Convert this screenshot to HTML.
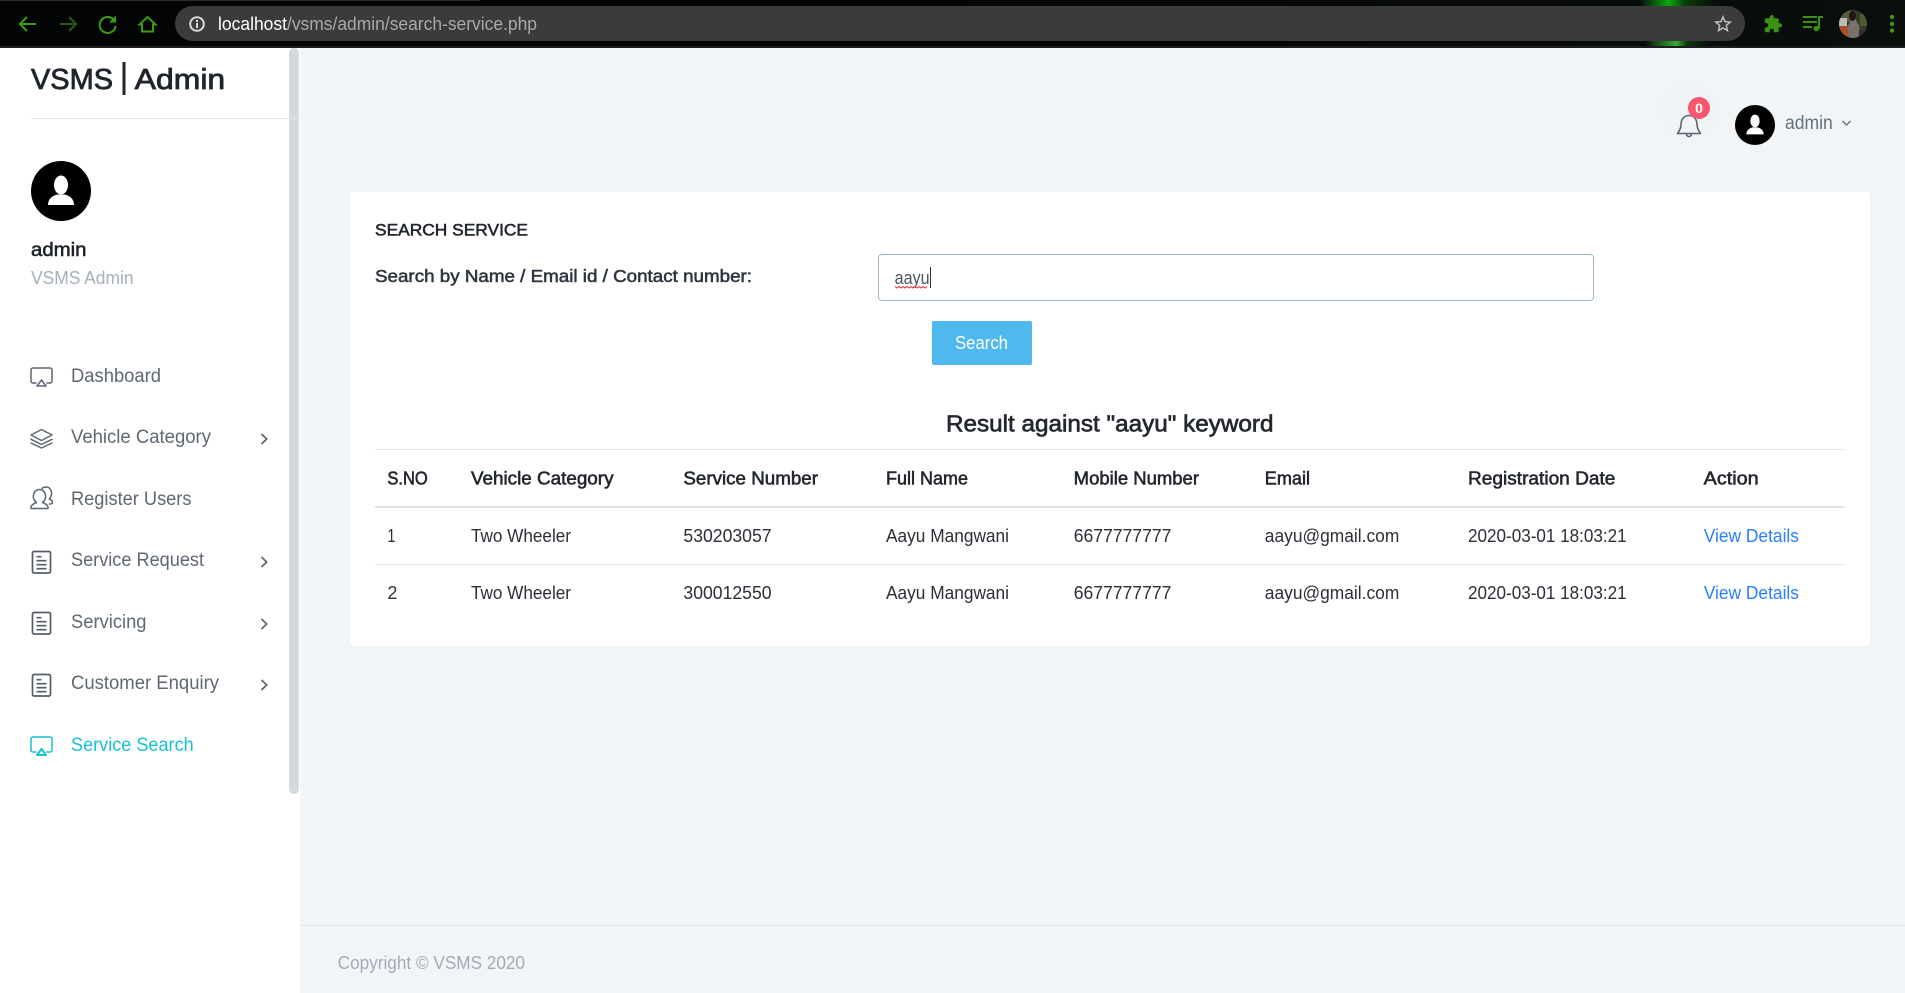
<!DOCTYPE html>
<html lang="en">
<head>
<meta charset="utf-8">
<title>VSMS | Admin - Search Service</title>
<style>
html,body{margin:0;padding:0;width:1905px;height:993px;overflow:hidden;background:#f2f5f8}
body{position:relative;font-family:"Liberation Sans",sans-serif}
.box{position:absolute;box-sizing:border-box}
#bar{left:0;top:0;width:1905px;height:48px;background:linear-gradient(90deg,#030504 0,#050706 60%,#0a0f0c 100%);border-bottom:2px solid #1c1d1c}
#barTop{left:0;top:0;width:480px;height:1px;background:#2a2a2a}
#glow1{left:1640px;top:0;width:75px;height:6px;background:linear-gradient(90deg,rgba(10,160,10,0),#0fa80f 38%,rgba(10,120,10,.45) 60%,rgba(10,160,10,0))}
#glow2{left:1645px;top:41px;width:65px;height:5px;background:linear-gradient(90deg,rgba(40,170,40,0),#39ad32 48%,rgba(20,110,20,.45) 65%,rgba(40,170,40,0))}
#pill{left:175px;top:6px;width:1570px;height:35px;border-radius:18px;background:#3b3b3b}
#side{left:0;top:48px;width:300px;height:945px;background:#fff}
#track{left:289px;top:48px;width:10px;height:746px;background:#d5d9dc;border-radius:5px}
#sideline{left:31px;top:118px;width:269px;height:1px;background:#e4e6e8}
#card{left:350px;top:192px;width:1520px;height:454px;background:#fff;border-radius:4px}
#input{left:878px;top:254px;width:716px;height:47px;background:#fff;border:1px solid #9fb9c9;border-radius:4px}
#btn{left:932px;top:321px;width:100px;height:44px;background:#4fb9ee;border-radius:2px}
.line{background:#e3e6e9;left:375px;width:1470px;height:1px}
#l1{top:449px}
#l2{top:506px;height:2px;background:#dfe3e7}
#l3{top:564px}
#foot{left:300px;top:925px;width:1605px;height:1px;background:#e1e5ea}
#ov{position:absolute;left:0;top:0;width:1905px;height:993px}
text{font-family:"Liberation Sans",sans-serif}
.m{stroke-width:.55px}
.nav{font-size:19px;fill:#5f6772}
.hd{font-size:18px;fill:#22262d;stroke:#22262d}
.td{font-size:18px;fill:#2b2f36}
.a{font-size:18px;fill:#2a7fff}
.ic{fill:none;stroke:#5d6672;stroke-width:1.5;stroke-linejoin:round;stroke-linecap:round}
.gr{fill:none;stroke:#3f9b14;stroke-width:2}
</style>
</head>
<body>
<div class="box" id="bar"></div>
<div class="box" id="barTop"></div>
<div class="box" id="glow1"></div>
<div class="box" id="glow2"></div>
<div class="box" id="pill"></div>
<div class="box" id="side"></div>
<div class="box" id="track"></div>
<div class="box" id="sideline"></div>
<div class="box" id="card"></div>
<div class="box" id="input"></div>
<div class="box" id="btn"></div>
<div class="box line" id="l1"></div>
<div class="box line" id="l2"></div>
<div class="box line" id="l3"></div>
<div class="box" id="foot"></div>

<svg id="ov" viewBox="0 0 1905 993" xmlns="http://www.w3.org/2000/svg">
<defs>
<clipPath id="cav"><circle cx="1853" cy="24" r="14"/></clipPath>
</defs>

<!-- browser chrome -->
<path class="gr" d="M36 24H20M27 17l-7 7 7 7"/>
<path class="gr" style="stroke:#255a10" d="M60 24H76M69 17l7 7-7 7"/>
<path class="gr" d="M113.5 19.5A8 8 0 1 0 115.6 26"/>
<path d="M116 15.5v7h-7z" fill="#3f9b14"/>
<path class="gr" d="M147.5 17L155.5 24.5H153V31.5H142V24.5H139.5Z"/>
<circle cx="197" cy="24" r="6.8" fill="none" stroke="#d8d8d8" stroke-width="2"/>
<rect x="196" y="23" width="2" height="5" fill="#d8d8d8"/>
<rect x="196" y="20" width="2" height="2" fill="#d8d8d8"/>
<text x="218" y="30" font-size="18" fill="#fff" textLength="69" lengthAdjust="spacingAndGlyphs">localhost</text>
<text x="287" y="30" font-size="18" fill="#a9a9a9" textLength="250" lengthAdjust="spacingAndGlyphs">/vsms/admin/search-service.php</text>
<g transform="translate(1712.2 13.2) scale(.9)"><path fill="#c4c4c4" d="M22 9.24l-7.19-.62L12 2 9.19 8.63 2 9.24l5.46 4.73L5.82 21 12 17.27 18.18 21l-1.63-7.03L22 9.24zM12 15.4l-3.76 2.27 1-4.28-3.32-2.88 4.38-.38L12 6.1l1.71 4.04 4.38.38-3.32 2.88 1 4.28L12 15.4z"/></g>
<g transform="translate(1763.2 14.2) scale(.82)"><path fill="#3b9112" d="M20.5 11H19V7c0-1.1-.9-2-2-2h-4V3.5C13 2.12 11.88 1 10.5 1S8 2.12 8 3.5V5H4c-1.1 0-1.99.9-1.99 2v3.8H3.5c1.49 0 2.7 1.21 2.7 2.7s-1.21 2.7-2.7 2.7H2V20c0 1.1.9 2 2 2h3.8v-1.5c0-1.49 1.21-2.7 2.7-2.7 1.49 0 2.7 1.21 2.7 2.7V22H17c1.1 0 2-.9 2-2v-4h1.5c1.38 0 2.5-1.12 2.5-2.5S21.88 11 20.5 11z"/></g>
<path d="M1803 17h14M1803 22h14M1803 27h9M1819 29V17h4" fill="none" stroke="#3b9112" stroke-width="2"/>
<circle cx="1816.3" cy="28.5" r="2.8" fill="#3b9112"/>
<g clip-path="url(#cav)">
<rect x="1839" y="10" width="28" height="28" fill="#3a3a28"/>
<rect x="1839" y="10" width="12" height="12" fill="#5a5a40"/>
<rect x="1839" y="18" width="8" height="8" fill="#b9bdb6"/>
<rect x="1839" y="26" width="13" height="12" fill="#a8502a"/>
<rect x="1860" y="14" width="7" height="12" fill="#4f5a34"/>
<rect x="1858" y="30" width="9" height="8" fill="#332c2a"/>
<path d="M1850 13h5l1.500 9 3 4-1 12h-10l-1-12 3-4z" fill="#77736c"/>
<ellipse cx="1852.500" cy="16" rx="3.500" ry="5" fill="#201512"/>
</g>
<g fill="#3f9b14"><circle cx="1892" cy="17" r="2.1"/><circle cx="1892" cy="24" r="2.1"/><circle cx="1892" cy="30.5" r="2.1"/></g>

<!-- sidebar header -->
<text x="31" y="89" font-size="29" fill="#20252c" stroke="#20252c" style="stroke-width:.8px" textLength="82" lengthAdjust="spacingAndGlyphs">VSMS</text>
<rect x="122.500" y="62" width="3" height="33" fill="#20252c"/>
<text x="134.700" y="89" font-size="29" fill="#20252c" stroke="#20252c" style="stroke-width:.8px" textLength="90.500" lengthAdjust="spacingAndGlyphs">Admin</text>
<circle cx="61" cy="191" r="30" fill="#000"/>
<g transform="translate(61 191)" fill="#fff"><ellipse cx="0" cy="-6" rx="7" ry="9.5"/><path d="M-13 14c0-6 4-9 9-10.500h8c5 1.500 9 4.500 9 10.500z"/></g>
<text x="31" y="256" font-size="19" fill="#1e2229" stroke="#1e2229" class="m" textLength="55.500" lengthAdjust="spacingAndGlyphs">admin</text>
<text x="31" y="284" font-size="18" fill="#a5b0bb" textLength="102.500" lengthAdjust="spacingAndGlyphs">VSMS Admin</text>

<!-- nav -->
<text class="nav" x="71" y="382" textLength="90" lengthAdjust="spacingAndGlyphs">Dashboard</text>
<text class="nav" x="71" y="443" textLength="140" lengthAdjust="spacingAndGlyphs">Vehicle Category</text>
<text class="nav" x="71" y="505" textLength="120.500" lengthAdjust="spacingAndGlyphs">Register Users</text>
<text class="nav" x="71" y="566" textLength="133" lengthAdjust="spacingAndGlyphs">Service Request</text>
<text class="nav" x="71" y="628" textLength="75.500" lengthAdjust="spacingAndGlyphs">Servicing</text>
<text class="nav" x="71" y="689" textLength="148" lengthAdjust="spacingAndGlyphs">Customer Enquiry</text>
<text class="nav" style="fill:#17c1d2" x="71" y="751" textLength="122.700" lengthAdjust="spacingAndGlyphs">Service Search</text>

<path class="ic" d="M36 383h-3a2 2 0 0 1-2-2V370a2 2 0 0 1 2-2h17a2 2 0 0 1 2 2v11a2 2 0 0 1-2 2h-3"/>
<path class="ic" d="M41.500 380l4.500 6h-9z" stroke-width="2"/>
<path class="ic" d="M41.500 429.500L52 435 41.500 440.500 31 435zM31 439.300L41.500 444.500 52 439.300M31 443L41.500 448 52 443"/>
<path class="ic" d="M31 508.500v-1.500c0-2 3-3.500 5.500-4.500c-2.500-2-3.500-5-3-7.500c.5-3.500 3-5.500 6-5.500s5.500 2 6 5.500c.5 2.500-.5 5.500-3 7.500c2.500 1 5.500 2.500 5.500 4.500v1.500z"/>
<path class="ic" d="M42 488.500c1-1 2.500-1.500 4-1.500c3 0 5 2 5.500 5c.3 2.500-.5 5-2.200 7c1.700.7 3.200 1.700 3.200 3.500c0 1-1 1.500-3 1.500"/>
<g id="doc">
<rect class="ic" x="32.500" y="551.500" width="18" height="21.500" rx="1.500" style="stroke:#565d68;stroke-width:1.700"/>
<path class="ic" style="stroke:#565d68;stroke-width:1.700;stroke-linecap:butt" d="M36.500 556.700h5M36.500 560.700h10M36.500 564.700h10M36.500 568.700h10"/>
</g>
<g transform="translate(0 61)"><rect class="ic" x="32.500" y="551.500" width="18" height="21.500" rx="1.500" style="stroke:#565d68;stroke-width:1.700"/><path class="ic" style="stroke:#565d68;stroke-width:1.700;stroke-linecap:butt" d="M36.500 556.700h5M36.500 560.700h10M36.500 564.700h10M36.500 568.700h10"/></g>
<g transform="translate(0 123)"><rect class="ic" x="32.500" y="551.500" width="18" height="21.500" rx="1.500" style="stroke:#565d68;stroke-width:1.700"/><path class="ic" style="stroke:#565d68;stroke-width:1.700;stroke-linecap:butt" d="M36.500 556.700h5M36.500 560.700h10M36.500 564.700h10M36.500 568.700h10"/></g>
<path class="ic" style="stroke:#17c1d2" d="M36 752h-3a2 2 0 0 1-2-2V739a2 2 0 0 1 2-2h17a2 2 0 0 1 2 2v11a2 2 0 0 1-2 2h-3"/>
<path class="ic" style="stroke:#17c1d2;stroke-width:2" d="M41.500 749l4.500 6h-9z"/>

<path class="ic" style="stroke-width:1.800" d="M262 434.500l4.700 4.500-4.700 4.500"/>
<path class="ic" style="stroke-width:1.800" d="M262 557.500l4.700 4.500-4.700 4.500"/>
<path class="ic" style="stroke-width:1.800" d="M262 619.500l4.700 4.500-4.700 4.500"/>
<path class="ic" style="stroke-width:1.800" d="M262 680.500l4.700 4.500-4.700 4.500"/>

<!-- top right -->
<circle cx="1689" cy="110" r="30" fill="#f1f4f7"/>
<path fill="none" stroke="#5a6675" stroke-width="1.600" stroke-linejoin="round" d="M1689 115.500c-5 0-8 4-8 9c0 4-2 7-3.500 9h23c-1.500-2-3.500-5-3.500-9c0-5-3-9-8-9z"/>
<path fill="none" stroke="#5a6675" stroke-width="1.600" d="M1686.500 134a2.500 2.500 0 0 0 5 0"/>
<circle cx="1699" cy="108" r="11" fill="#f7566f"/>
<text x="1699" y="113" font-size="14" font-weight="700" fill="#fff" text-anchor="middle">0</text>
<circle cx="1755" cy="125" r="20" fill="#000"/>
<g transform="translate(1755 125) scale(.667)" fill="#fff"><ellipse cx="0" cy="-6" rx="7" ry="9.500"/><path d="M-13 14c0-6 4-9 9-10.500h8c5 1.500 9 4.500 9 10.500z"/></g>
<text x="1785" y="129" font-size="19" fill="#63707e" textLength="47.700" lengthAdjust="spacingAndGlyphs">admin</text>
<path fill="none" stroke="#63707e" stroke-width="1.400" d="M1842.500 121l4 4 4-4"/>

<!-- card contents -->
<text x="375" y="235.700" font-size="17" fill="#22262d" stroke="#22262d" class="m" textLength="153" lengthAdjust="spacingAndGlyphs">SEARCH SERVICE</text>
<text x="375" y="282.200" font-size="17.500" fill="#2f3540" stroke="#2f3540" class="m" textLength="377" lengthAdjust="spacingAndGlyphs">Search by Name / Email id / Contact number:</text>
<text x="894.600" y="284" font-size="18" fill="#4a5560" textLength="35" lengthAdjust="spacingAndGlyphs">aayu</text>
<path d="M895 286.500l2 1.500 2-1.500 2 1.500 2-1.500 2 1.500 2-1.500 2 1.500 2-1.500 2 1.500 2-1.500 2 1.500 2-1.500 2 1.500 2-1.500 2 1.500 2-1.500" fill="none" stroke="#e8333c" stroke-width="1"/>
<rect x="930" y="267" width="1" height="21" fill="#2d3640"/>
<text x="955" y="349" font-size="18" fill="#fff" textLength="53" lengthAdjust="spacingAndGlyphs">Search</text>
<text x="946" y="431.400" font-size="23" fill="#23272e" stroke="#23272e" style="stroke-width:.65px" textLength="327.500" lengthAdjust="spacingAndGlyphs">Result against "aayu" keyword</text>

<text class="hd m" x="387.400" y="484.500" textLength="40.400" lengthAdjust="spacingAndGlyphs">S.NO</text>
<text class="hd m" x="471" y="484.500" textLength="142.500" lengthAdjust="spacingAndGlyphs">Vehicle Category</text>
<text class="hd m" x="683.400" y="484.500" textLength="134.600" lengthAdjust="spacingAndGlyphs">Service Number</text>
<text class="hd m" x="886" y="484.500" textLength="82" lengthAdjust="spacingAndGlyphs">Full Name</text>
<text class="hd m" x="1073.700" y="484.500" textLength="125.300" lengthAdjust="spacingAndGlyphs">Mobile Number</text>
<text class="hd m" x="1264.800" y="484.500" textLength="45.200" lengthAdjust="spacingAndGlyphs">Email</text>
<text class="hd m" x="1468" y="484.500" textLength="147.400" lengthAdjust="spacingAndGlyphs">Registration Date</text>
<text class="hd m" x="1703.700" y="484.500" textLength="54.900" lengthAdjust="spacingAndGlyphs">Action</text>

<text class="td" x="387.400" y="542" textLength="8" lengthAdjust="spacingAndGlyphs">1</text>
<text class="td" x="471" y="542" textLength="100" lengthAdjust="spacingAndGlyphs">Two Wheeler</text>
<text class="td" x="683.400" y="542" textLength="88.200" lengthAdjust="spacingAndGlyphs">530203057</text>
<text class="td" x="886" y="542" textLength="123" lengthAdjust="spacingAndGlyphs">Aayu Mangwani</text>
<text class="td" x="1073.700" y="542" textLength="97.700" lengthAdjust="spacingAndGlyphs">6677777777</text>
<text class="td" x="1264.800" y="542" textLength="134.500" lengthAdjust="spacingAndGlyphs">aayu@gmail.com</text>
<text class="td" x="1468" y="542" textLength="158.700" lengthAdjust="spacingAndGlyphs">2020-03-01 18:03:21</text>
<text class="a" x="1703.700" y="542" textLength="95.300" lengthAdjust="spacingAndGlyphs">View Details</text>

<text class="td" x="387.400" y="599" textLength="10" lengthAdjust="spacingAndGlyphs">2</text>
<text class="td" x="471" y="599" textLength="100" lengthAdjust="spacingAndGlyphs">Two Wheeler</text>
<text class="td" x="683.400" y="599" textLength="88.200" lengthAdjust="spacingAndGlyphs">300012550</text>
<text class="td" x="886" y="599" textLength="123" lengthAdjust="spacingAndGlyphs">Aayu Mangwani</text>
<text class="td" x="1073.700" y="599" textLength="97.700" lengthAdjust="spacingAndGlyphs">6677777777</text>
<text class="td" x="1264.800" y="599" textLength="134.500" lengthAdjust="spacingAndGlyphs">aayu@gmail.com</text>
<text class="td" x="1468" y="599" textLength="158.700" lengthAdjust="spacingAndGlyphs">2020-03-01 18:03:21</text>
<text class="a" x="1703.700" y="599" textLength="95.300" lengthAdjust="spacingAndGlyphs">View Details</text>

<text x="337.700" y="969" font-size="18" fill="#a1abb5" textLength="187.300" lengthAdjust="spacingAndGlyphs">Copyright © VSMS 2020</text>
</svg>
</body>
</html>
